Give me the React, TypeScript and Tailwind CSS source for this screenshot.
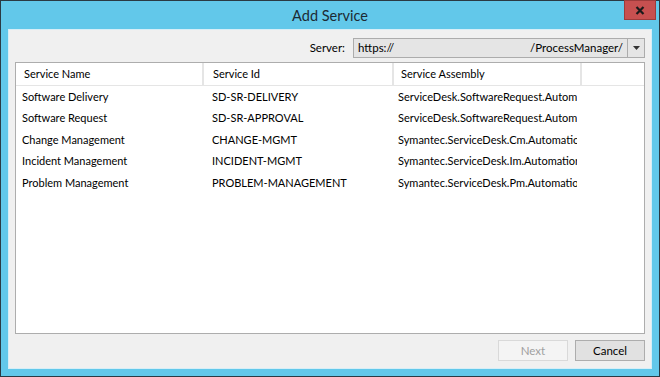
import React from "react";

const rows = [
  ["Software Delivery", "SD-SR-DELIVERY", "ServiceDesk.SoftwareRequest.Automation"],
  ["Software Request", "SD-SR-APPROVAL", "ServiceDesk.SoftwareRequest.Automation"],
  ["Change Management", "CHANGE-MGMT", "Symantec.ServiceDesk.Cm.Automation"],
  ["Incident Management", "INCIDENT-MGMT", "Symantec.ServiceDesk.Im.Automation"],
  ["Problem Management", "PROBLEM-MANAGEMENT", "Symantec.ServiceDesk.Pm.Automation"],
];

export default function App() {
  return (
    <div
      className="w-[660px] h-[377px] border border-[#2a3a44] bg-[#62c8ea] flex flex-col text-[#000]"
      style={{ fontFamily: 'Lato, "Open Sans", sans-serif' }}
    >
      <div className="relative h-[28px] flex items-center justify-center">
        <span className="text-[14.5px] text-[#1c2a33] mt-[1px]">Add Service</span>
        <div className="absolute right-[3px] top-[-1px] w-[32px] h-[20px] bg-[#c75050] border border-[#9e3b3b] flex items-center justify-center">
          <svg width="10" height="9" viewBox="0 0 10 9">
            <path d="M1.5 1 L8.5 8 M8.5 1 L1.5 8" stroke="#1a1a1a" strokeWidth="2.2" />
          </svg>
        </div>
      </div>
      <div className="mx-[7px] mb-[7px] flex-1 bg-[#f0f0f0] border border-[#d6eef7] flex flex-col px-[6px] pt-[8px] pb-[7px]">
        <div className="flex items-center justify-end h-[20px] gap-[8px]">
          <span className="text-[11.5px]">Server:</span>
          <div className="w-[292px] h-[20px] bg-[#e5e5e5] border border-[#acacac] flex">
            <div className="flex-1 flex items-center justify-between px-[4px] text-[11.5px]">
              <span>https://</span>
              <span>/ProcessManager/</span>
            </div>
            <div className="w-[17px] border-l border-[#acacac] flex items-center justify-center">
              <svg width="7" height="4" viewBox="0 0 7 4">
                <path d="M0 0 L7 0 L3.5 4 Z" fill="#333" />
              </svg>
            </div>
          </div>
        </div>
        <div className="mt-[4px] h-[272px] bg-white border border-[#adadad] flex flex-col text-[11px]">
          <div className="h-[23px] flex border-b border-[#e5e5e5]">
            <div className="w-[188px] border-r-2 border-[#e5e5e5] pl-[8px] flex items-center">Service Name</div>
            <div className="w-[190px] border-r-2 border-[#e5e5e5] pl-[9px] flex items-center">Service Id</div>
            <div className="w-[188px] border-r-2 border-[#e5e5e5] pl-[7px] flex items-center">Service Assembly</div>
            <div className="flex-1" />
          </div>
          {rows.map((r) => (
            <div key={r[0]} className="h-[21.5px] flex items-center whitespace-nowrap">
              <div className="w-[188px] pl-[6px] overflow-hidden">{r[0]}</div>
              <div className="w-[190px] pl-[8px] overflow-hidden">{r[1]}</div>
              <div className="w-[183px] pl-[4px] overflow-hidden">{r[2]}</div>
            </div>
          ))}
        </div>
        <div className="mt-auto flex justify-end gap-[7px]">
          <div className="w-[70px] h-[21px] border border-[#d9d9d9] bg-[#f4f4f4] text-[#a0a0a0] text-[11.5px] flex items-center justify-center">
            Next
          </div>
          <div className="w-[70px] h-[21px] border border-[#adadad] bg-[#e1e1e1] text-[11.5px] flex items-center justify-center">
            Cancel
          </div>
        </div>
      </div>
    </div>
  );
}
